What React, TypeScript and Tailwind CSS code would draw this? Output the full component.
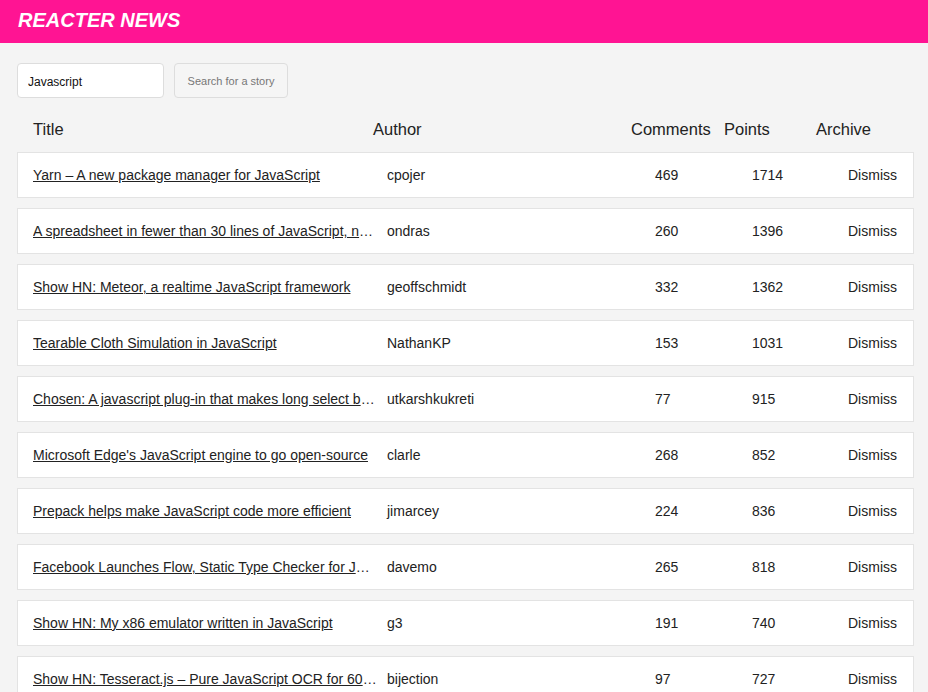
import React from "react";

type Story = {
  title: string;
  author: string;
  comments: number;
  points: number;
};

const stories: Story[] = [
  { title: "Yarn – A new package manager for JavaScript", author: "cpojer", comments: 469, points: 1714 },
  { title: "A spreadsheet in fewer than 30 lines of JavaScript, no library used", author: "ondras", comments: 260, points: 1396 },
  { title: "Show HN: Meteor, a realtime JavaScript framework", author: "geoffschmidt", comments: 332, points: 1362 },
  { title: "Tearable Cloth Simulation in JavaScript", author: "NathanKP", comments: 153, points: 1031 },
  { title: "Chosen: A javascript plug-in that makes long select boxes user-friendly", author: "utkarshkukreti", comments: 77, points: 915 },
  { title: "Microsoft Edge's JavaScript engine to go open-source", author: "clarle", comments: 268, points: 852 },
  { title: "Prepack helps make JavaScript code more efficient", author: "jimarcey", comments: 224, points: 836 },
  { title: "Facebook Launches Flow, Static Type Checker for JavaScript", author: "davemo", comments: 265, points: 818 },
  { title: "Show HN: My x86 emulator written in JavaScript", author: "g3", comments: 191, points: 740 },
  { title: "Show HN: Tesseract.js – Pure JavaScript OCR for 60 Languages", author: "bijection", comments: 97, points: 727 },
  { title: "JavaScript: The Good Parts", author: "tptacek", comments: 181, points: 702 },
];

export default function App() {
  return (
    <div className="min-h-screen bg-[#f4f4f4] text-[#222] font-['Liberation_Sans',Arial,sans-serif]">
      <header className="h-[43px] bg-[#ff1493] flex items-center px-[18px] pb-[3px]">
        <h1 className="text-white text-[20px] font-bold italic leading-none">REACTER NEWS</h1>
      </header>

      <div className="mx-[17px] w-[897px]">
        {/* search */}
        <form className="flex gap-[10px] mt-[20px]" onSubmit={(e) => e.preventDefault()}>
          <input
            type="text"
            defaultValue="Javascript"
            className="w-[147px] h-[35px] bg-white border border-[#dddddd] rounded-[4px] px-[10px] pt-[3px] text-[12px] text-[#111] outline-none"
          />
          <button
            type="submit"
            className="w-[114px] h-[35px] bg-[#f5f5f5] border border-[#dddddd] rounded-[4px] pt-[2px] text-[11px] text-[#777]"
          >
            Search for a story
          </button>
        </form>

        {/* table header */}
        <div className="flex mt-[19px] h-[24px] leading-[24px] text-[16.5px] text-[#222] pl-[16px]">
          <span className="w-[340px]">Title</span>
          <span className="w-[258px]">Author</span>
          <span className="w-[93px]">Comments</span>
          <span className="w-[92px]">Points</span>
          <span>Archive</span>
        </div>

        {/* rows */}
        <div className="flex flex-col gap-[10px] mt-[11px] pb-[20px]">
          {stories.map((s) => (
            <div
              key={s.title}
              className="flex items-center bg-white border border-[#e3e3e3] py-[10px] pl-[15px] leading-[24px] text-[14px] whitespace-nowrap"
            >
              <a
                href="#"
                className="block w-[344px] mr-[10px] overflow-hidden text-ellipsis whitespace-nowrap underline text-[#222]"
              >
                {s.title}
              </a>
              <span className="w-[268px]">{s.author}</span>
              <span className="w-[97px]">{s.comments}</span>
              <span className="w-[96px]">{s.points}</span>
              <span>
                <button type="button" className="text-[#222] text-[14px]">Dismiss</button>
              </span>
            </div>
          ))}
        </div>
      </div>
    </div>
  );
}
